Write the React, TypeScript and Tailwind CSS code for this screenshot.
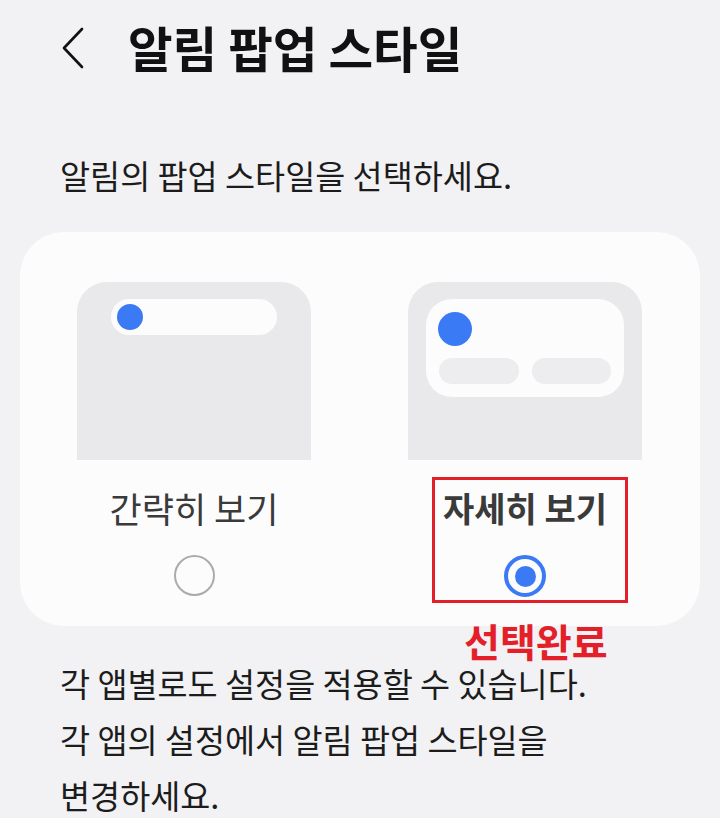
import React from 'react';

const font = { fontFamily: '"Noto Sans CJK KR", "Noto Sans", sans-serif' };

const BackIcon: React.FC = () => (
    <svg width="26" height="42" viewBox="0 0 26 42" fill="none">
        <path d="M22 2 L4 21 L22 40" stroke="#111" strokeWidth="2.6" strokeLinecap="round" strokeLinejoin="round" />
    </svg>
);

// Compact popup preview: one slim pill with the app dot
const BriefPreview: React.FC = () => (
    <div className="h-[178px] w-[234px] rounded-t-[30px] bg-[#e9e9eb] pt-[17px] pl-[34px]">
        <div className="flex h-[36px] w-[166px] items-center rounded-full bg-[#fcfcfd] pl-[6px]">
            <div className="h-[26px] w-[26px] rounded-full bg-[#3b7af5]" />
        </div>
    </div>
);

// Detailed popup preview: card with dot and two action buttons
const DetailPreview: React.FC = () => (
    <div className="h-[178px] w-[234px] rounded-t-[30px] bg-[#e9e9eb] pt-[17px] px-[18px]">
        <div className="flex h-[98px] w-full flex-col rounded-[26px] bg-[#fcfcfd] px-[13px] pt-[13px]">
            <div className="ml-[-1px] h-[34px] w-[34px] rounded-full bg-[#3b7af5]" />
            <div className="mt-[12px] flex gap-[13px]">
                <div className="h-[26px] w-[80px] rounded-full bg-[#ededef]" />
                <div className="h-[26px] w-[80px] rounded-full bg-[#ededef]" />
            </div>
        </div>
    </div>
);

const Radio: React.FC<{ checked: boolean }> = ({ checked }) =>
    checked ? (
        <div className="flex h-[42px] w-[42px] items-center justify-center rounded-full border-[4px] border-[#3b7af5]">
            <div className="h-[21px] w-[21px] rounded-full bg-[#3b7af5]" />
        </div>
    ) : (
        <div className="h-[41px] w-[41px] rounded-full border-[2.5px] border-[#ababab]" />
    );

const options = [
    { label: '간략히 보기', preview: <BriefPreview />, checked: false },
    { label: '자세히 보기', preview: <DetailPreview />, checked: true },
];

export default function App() {
    return (
        <div className="min-h-[818px] w-full overflow-hidden bg-[#f2f2f4] text-[#161616]" style={font}>
            <header className="flex h-[95px] items-center pl-[60px]">
                <BackIcon />
                <h1 className="ml-[42px] text-[48.5px] font-bold leading-none text-[#111]">
                    알림 팝업 스타일
                </h1>
            </header>

            <p className="mt-[60px] pl-[60px] text-[32.7px] leading-[40px] text-[#1c1c1c]">
                알림의 팝업 스타일을 선택하세요.
            </p>

            <section className="mx-[20px] mt-[37px] h-[394px] rounded-[44px] bg-[#fcfcfd] pt-[50px] pl-[57px]">
                <div className="flex gap-[97px]">
                    {options.map((opt, idx) => (
                        <div key={idx} className="flex w-[234px] flex-col items-center">
                            {opt.preview}
                            {/* selection frame sits slightly right of the column centre */}
                            <div
                                className={`mt-[17px] ml-[10px] flex w-[196px] flex-col items-center border-[3px] pt-[10px] pb-[3px] pr-[10px] ${
                                    opt.checked ? 'border-[#e3202a]' : 'border-transparent'
                                }`}
                            >
                                <span
                                    className={`text-[#3a3a3a] leading-[36px] ${
                                        opt.checked ? 'text-[34px] font-bold' : 'text-[35px]'
                                    }`}
                                >
                                    {opt.label}
                                </span>
                                <div className="mt-[29px]">
                                    <Radio checked={opt.checked} />
                                </div>
                            </div>
                        </div>
                    ))}
                </div>
            </section>

            <div className="mt-[-1px] h-[30px] pl-[464px] text-[39px] font-bold leading-[30px] text-[#e3202a]">
                선택완료
            </div>

            <div className="mt-[0px] pl-[60px] text-[32.7px] leading-[56px] text-[#1c1c1c]">
                <p>각 앱별로도 설정을 적용할 수 있습니다.</p>
                <p>각 앱의 설정에서 알림 팝업 스타일을</p>
                <p>변경하세요.</p>
            </div>
        </div>
    );
}
